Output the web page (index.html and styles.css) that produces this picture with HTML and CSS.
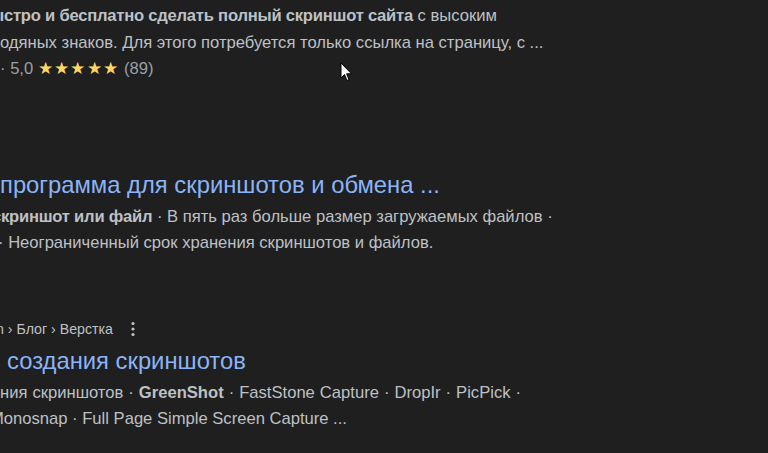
FILE: index.html
```html
<!DOCTYPE html>
<html lang="ru">
<head>
    <meta charset="UTF-8">
    <title>Скриншот сайта — результаты поиска</title>
    <link rel="stylesheet" href="styles.css">
</head>
<body>
    <div id="results">
        <div class="result first">
            <div class="snippet">
                <div class="line out-10"><b>ыстро и бесплатно сделать полный скриншот сайта</b> с высоким</div>
                <div class="line">одяных знаков. Для этого потребуется только ссылка на страницу, с ...</div>
            </div>
            <div class="rating">· 5,0 <span class="stars">★★★★★</span> (89)</div>
        </div>
        <div class="result second">
            <h3 class="title">программа для скриншотов и обмена ...</h3>
            <div class="snippet">
                <div class="line out-8"><b>скриншот или файл</b> · В пять раз больше размер загружаемых файлов ·</div>
                <div class="line out-2">· Неограниченный срок хранения скриншотов и файлов.</div>
            </div>
        </div>
        <div class="result third">
            <div class="crumbs out-4"><span>n › Блог › Верстка</span><svg class="more" width="6" height="16" viewBox="0 0 6 16"><circle cx="3" cy="2.5" r="1.6"/><circle cx="3" cy="8" r="1.6"/><circle cx="3" cy="13.5" r="1.6"/></svg></div>
            <h3 class="title in-7">создания скриншотов</h3>
            <div class="snippet">
                <div class="line latin">ния скриншотов · <b>GreenShot</b> · FastStone Capture · DropIr · PicPick ·</div>
                <div class="line out-10">Monosnap · Full Page Simple Screen Capture ...</div>
            </div>
        </div>
    </div>
    <svg class="cursor" width="13" height="20" viewBox="0 0 13 20">
        <path d="M1 1 L1 16 L4.5 12.5 L7 18.5 L9 17.6 L6.6 11.8 L11.5 11.8 Z" fill="#fff" stroke="#000" stroke-width="1"/>
    </svg>
</body>
</html>
```

FILE: styles.css
```css
html, body {
    margin: 0;
    padding: 0;
    height: 100%;
    background: #1f1f1f;
    overflow: hidden;
}
body {
    font-family: "Liberation Sans", Arial, sans-serif;
    color: #bdc1c6;
    position: relative;
}
#results {
    padding-top: 3px;
}
.line,
.rating {
    font-size: 16.6px;
    line-height: 26.5px;
    white-space: nowrap;
}
.line b {
    font-weight: bold;
    letter-spacing: -0.23px;
}
.line.latin {
    word-spacing: 0.4px;
}
.line.latin b {
    letter-spacing: 0;
}
.rating {
    color: #9aa0a6;
}
.stars {
    color: #fdd663;
    letter-spacing: 1.3px;
}
.second {
    margin-top: 86px;
}
.third {
    margin-top: 60px;
}
.title {
    margin: 0 0 3px;
    font-size: 23.8px;
    font-weight: normal;
    line-height: 32px;
    color: #8ab4f8;
    white-space: nowrap;
}
.crumbs {
    display: flex;
    align-items: center;
    height: 24px;
    font-size: 14.2px;
    line-height: 24px;
    margin-bottom: 4px;
    white-space: nowrap;
}
.more {
    flex: none;
    margin-left: 17px;
    fill: #bdc1c6;
}
/* the page is cropped on the left, so lines start at slightly different places */
.out-10 { margin-left: -10px; }
.out-8 { margin-left: -8px; }
.out-4 { margin-left: -4px; }
.out-2 { margin-left: -2px; }
.in-7 { margin-left: 7px; }
.cursor {
    position: absolute;
    left: 340px;
    top: 62px;
}
```
